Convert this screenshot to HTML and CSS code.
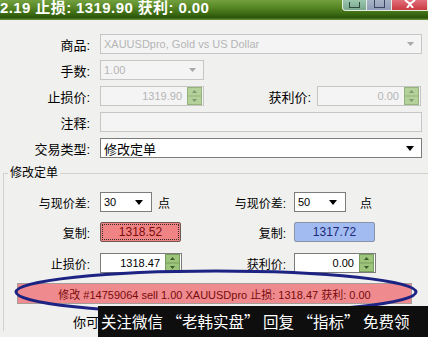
FILE: index.html
```html
<!DOCTYPE html>
<html lang="zh-CN">
<head>
    <meta charset="UTF-8">
    <meta name="viewport" content="width=device-width, initial-scale=1.0">
    <title>修改定单</title>
    <link rel="stylesheet" href="styles.css">
</head>
<body>
    <div class="titlebar">
        <span class="title">2.19 止损: 1319.90 获利: 0.00</span>
        <div class="winbtns">
            <span class="wbtn min"><i></i></span>
            <span class="wbtn max"><i></i></span>
            <span class="wbtn close">
                <svg width="12" height="8" viewBox="0 0 12 8"><path d="M1 0l5 4 5-4M3 8l3-4 3 4" stroke="#fff" stroke-width="2" fill="none"/></svg>
            </span>
        </div>
    </div>

    <div class="form">
        <div class="row">
            <span class="lbl">商品:</span>
            <div class="field off combo wide">
                <span class="val">XAUUSDpro, Gold vs US Dollar</span>
                <svg class="arrow" width="7" height="4" viewBox="0 0 7 4"><path d="M0 0h7l-3.5 4z" fill="#a8a8a8"/></svg>
            </div>
        </div>
        <div class="row">
            <span class="lbl">手数:</span>
            <div class="field off combo short">
                <span class="val">1.00</span>
                <svg class="arrow" width="7" height="4" viewBox="0 0 7 4"><path d="M0 0h7l-3.5 4z" fill="#a8a8a8"/></svg>
            </div>
        </div>
        <div class="row">
            <span class="lbl">止损价:</span>
            <div class="field off num short">
                <span class="val">1319.90</span>
                <svg class="spin" width="15" height="18" viewBox="0 0 15 18"><rect x="0.5" y="0.5" width="14" height="17" fill="#a9cc8a" stroke="#86a86a"/><path d="M1 9h13" stroke="#86a86a"/><path d="M5 6h5l-2.5-3zM5 12h5l-2.5 3z" fill="#6d8a58"/></svg>
            </div>
            <span class="lbl rlbl">获利价:</span>
            <div class="field off num short rfield">
                <span class="val">0.00</span>
                <svg class="spin" width="15" height="18" viewBox="0 0 15 18"><rect x="0.5" y="0.5" width="14" height="17" fill="#a9cc8a" stroke="#86a86a"/><path d="M1 9h13" stroke="#86a86a"/><path d="M5 6h5l-2.5-3zM5 12h5l-2.5 3z" fill="#6d8a58"/></svg>
            </div>
        </div>
        <div class="row">
            <span class="lbl">注释:</span>
            <div class="field off wide"></div>
        </div>
        <div class="row">
            <span class="lbl">交易类型:</span>
            <div class="field combo wide">
                <span class="val cn">修改定单</span>
                <svg class="arrow" width="8" height="5" viewBox="0 0 8 5"><path d="M0 0h8l-4 5z" fill="#000"/></svg>
            </div>
        </div>
    </div>

    <fieldset class="group">
        <legend>修改定单</legend>
        <div class="grow">
            <div class="half">
                <span class="lbl">与现价差:</span>
                <div class="field combo pts">
                    <span class="val">30</span>
                    <svg class="arrow" width="8" height="5" viewBox="0 0 8 5"><path d="M0 0h8l-4 5z" fill="#000"/></svg>
                </div>
                <span class="unit">点</span>
            </div>
            <div class="half right">
                <span class="lbl">与现价差:</span>
                <div class="field combo pts">
                    <span class="val">50</span>
                    <svg class="arrow" width="8" height="5" viewBox="0 0 8 5"><path d="M0 0h8l-4 5z" fill="#000"/></svg>
                </div>
                <span class="unit far">点</span>
            </div>
        </div>
        <div class="grow tall">
            <div class="half">
                <span class="lbl">复制:</span>
                <button class="copy sell">1318.52</button>
            </div>
            <div class="half right">
                <span class="lbl">复制:</span>
                <button class="copy buy">1317.72</button>
            </div>
        </div>
        <div class="grow">
            <div class="half">
                <span class="lbl">止损价:</span>
                <div class="field num mid">
                    <span class="val">1318.47</span>
                    <svg class="spin" width="15" height="18" viewBox="0 0 15 18"><rect x="0.5" y="0.5" width="14" height="17" fill="#9cc47a" stroke="#789c5c"/><path d="M1 9h13" stroke="#789c5c"/><path d="M5 6h5l-2.5-3zM5 12h5l-2.5 3z" fill="#3f5c2c"/></svg>
                </div>
            </div>
            <div class="half right">
                <span class="lbl">获利价:</span>
                <div class="field num mid">
                    <span class="val">0.00</span>
                    <svg class="spin" width="15" height="18" viewBox="0 0 15 18"><rect x="0.5" y="0.5" width="14" height="17" fill="#9cc47a" stroke="#789c5c"/><path d="M1 9h13" stroke="#789c5c"/><path d="M5 6h5l-2.5-3zM5 12h5l-2.5 3z" fill="#3f5c2c"/></svg>
                </div>
            </div>
        </div>
        <button class="modify">修改 #14759064 sell 1.00 XAUUSDpro 止损: 1318.47 获利: 0.00</button>
        <p class="hint">你可</p>
    </fieldset>

    <!-- hand-drawn mark over the button -->
    <svg class="mark" width="408" height="48" viewBox="0 0 408 48">
        <ellipse cx="204" cy="24" rx="200" ry="21" fill="none" stroke="#1d2383" stroke-width="3"/>
    </svg>

    <div class="banner">关注微信 “老韩实盘” 回复 “指标” 免费领</div>
</body>
</html>
```

FILE: styles.css
```css
* {
    box-sizing: border-box;
}
body {
    margin: 0;
    width: 428px;
    height: 337px;
    overflow: hidden;
    position: relative;
    background-color: #f0f0ee;
    font-family: "Liberation Sans", "Noto Sans CJK SC", sans-serif;
    font-size: 11px;
    color: #000;
}
.titlebar {
    height: 20px;
    display: flex;
    background: linear-gradient(to bottom, #74a03e 0%, #548424 40%, #36640f 75%, #2b520c 88%, #6c9a3c 100%);
}
.title {
    color: #fff;
    font-weight: bold;
    font-size: 15px;
    letter-spacing: 0.4px;
    line-height: 16px;
    white-space: nowrap;
}
.winbtns {
    margin-left: auto;
    display: flex;
    height: 11px;
}
.wbtn {
    height: 11px;
    border: 1px solid #e6eee0;
    border-top: none;
    display: flex;
    justify-content: center;
    align-items: flex-end;
}
.wbtn.min {
    width: 25px;
    border-radius: 0 0 0 4px;
    background: linear-gradient(#9cc6ae, #78a68e);
}
.wbtn.min i {
    width: 11px;
    height: 6px;
    margin-bottom: 2px;
    border: 1px solid #2e4a3a;
    border-top-width: 0;
}
.wbtn.max {
    width: 25px;
    border-left: none;
    background: linear-gradient(#aab4c8, #8e9cb6);
}
.wbtn.max i {
    width: 11px;
    height: 8px;
    margin-bottom: 2px;
    border: 1px solid #3c4660;
    border-top-width: 0;
}
.wbtn.close {
    width: 36px;
    border-left: none;
    background: linear-gradient(#e2707a, #c83a40);
    align-items: flex-start;
}
.form {
    padding-top: 14px;
}
.row {
    display: flex;
    align-items: center;
    height: 20px;
    margin-bottom: 6px;
}
.lbl {
    flex: none;
    width: 90px;
    text-align: right;
    font-size: 13px;
    white-space: nowrap;
}
.field {
    flex: none;
    margin-left: 10px;
    height: 20px;
    border: 1px solid #7c7c7c;
    background-color: #fff;
    display: flex;
    align-items: center;
    padding: 0 3px;
    white-space: nowrap;
}
.field.off {
    border-color: #c6c6c6;
    background-color: #f4f4f4;
    color: #b4b4b4;
}
.field .val {
    flex: 1;
}
.field .cn {
    font-size: 13px;
}
.field .arrow {
    margin-right: 4px;
}
.field.wide {
    width: 322px;
}
.field.short {
    width: 104px;
}
.field.num {
    padding-right: 1px;
}
.field.num .val {
    text-align: right;
    padding-right: 5px;
}
.field.off .spin {
    opacity: 0.85;
}
.rlbl {
    width: 107px;
}
.field.rfield {
    margin-left: 6px;
}
.group {
    margin: 8px 0 0 3px;
    padding: 12px 0 0 0;
    border: 1px solid #d2d2cc;
    border-right: none;
    border-bottom: none;
}
.group legend {
    margin-left: 4px;
    padding: 0 2px;
    font-size: 12px;
    line-height: 14px;
}
.grow {
    display: flex;
    height: 20px;
    margin-bottom: 10px;
}
.grow.tall {
    margin-bottom: 11px;
}
.half {
    display: flex;
    align-items: center;
    width: 196px;
}
.half .lbl {
    width: 86px;
    font-size: 12px;
}
.half.right .field,
.half.right .copy {
    margin-left: 8px;
}
.field.pts {
    width: 52px;
}
.field.pts .arrow {
    margin-right: 5px;
}
.unit {
    margin-left: 6px;
    font-size: 12px;
}
.unit.far {
    margin-left: 14px;
}
.field.mid {
    width: 82px;
}
.copy {
    margin-left: 10px;
    width: 81px;
    height: 20px;
    font-family: inherit;
    font-size: 12px;
    padding: 0;
    border-radius: 2px;
}
.copy.sell {
    background-color: #f08484;
    color: #7a0c0c;
    border: 1px solid #6c5a54;
    outline: 1px dotted #3a2a28;
    outline-offset: -3px;
}
.copy.buy {
    background-color: #a2bcf2;
    color: #1c2a78;
    border: 1px solid #8a94a8;
}
.modify {
    display: block;
    margin: 9px 0 0 13px;
    width: 395px;
    height: 21px;
    padding: 0;
    background-color: #ef8a8e;
    border: 1px solid #a89c98;
    color: #7a0a0a;
    font-family: inherit;
    font-size: 11px;
    white-space: nowrap;
}
.hint {
    margin: 11px 0 0 69px;
    line-height: 16px;
    font-size: 13px;
}
.mark {
    position: absolute;
    left: 12px;
    top: 268px;
}
.banner {
    position: absolute;
    left: 98px;
    top: 306px;
    right: 0;
    bottom: 0;
    background-color: #0e0e0e;
    color: #fff;
    font-family: "Noto Sans CJK SC", sans-serif;
    font-size: 15.5px;
    line-height: 31px;
    padding-left: 3px;
    white-space: nowrap;
    overflow: hidden;
}
```
